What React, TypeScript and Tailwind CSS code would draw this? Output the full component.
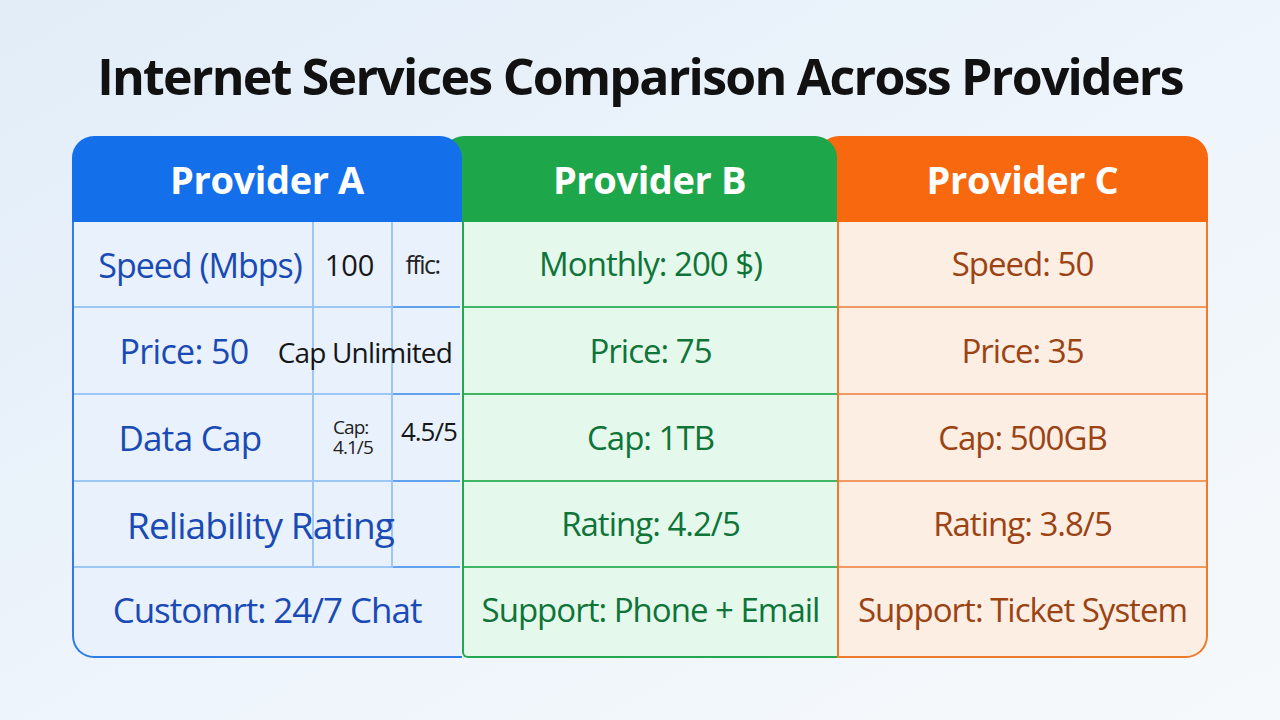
import React from 'react'

const rowH = ['h-[86px]', 'h-[87px]', 'h-[87px]', 'h-[86px]']

const bRows = ['Monthly: 200 $)', 'Price: 75', 'Cap: 1TB', 'Rating: 4.2/5', 'Support: Phone + Email']
const cRows = ['Speed: 50', 'Price: 35', 'Cap: 500GB', 'Rating: 3.8/5', 'Support: Ticket System']

function Header({ label, cls }: { label: string; cls: string }) {
  return (
    <div className={`relative h-[86px] rounded-t-[22px] flex items-center justify-center text-white font-bold text-[38px] tracking-[-0.01em] ${cls}`}
      style={{ fontFamily: '"Open Sans", sans-serif' }}>
      {label}
    </div>
  )
}

function SideColumn({ rows, wrap, line, text }: { rows: string[]; wrap: string; line: string; text: string }) {
  return (
    <div className={`flex flex-col ${wrap}`}>
      {rows.map((r, i) => (
        <div key={r}
          className={`flex items-center justify-center whitespace-nowrap text-[33px] font-medium tracking-[-0.03em] ${text} ${i < 4 ? `${rowH[i]} border-b-2 ${line}` : 'flex-1 pb-1'}`}
          style={{ fontFamily: '"Open Sans", sans-serif' }}>
          {r}
        </div>
      ))}
    </div>
  )
}

export default function App() {
  const cellA = 'border-b-2 border-[#5fa2ee]'
  const sub = 'border-r-2 border-[#9cc7f4]'
  const txt = 'flex items-center whitespace-nowrap'

  return (
    <div className="w-[1280px] h-[720px] overflow-hidden bg-linear-to-br from-[#e2edf8] via-[#edf4fb] to-[#f6f9fb] flex flex-col items-center pt-[44px]">
      <h1 className="h-[64px] leading-[64px] text-[50px] font-bold text-[#111] tracking-[-0.035em]"
        style={{ fontFamily: '"Open Sans", sans-serif' }}>
        Internet Services Comparison Across Providers
      </h1>

      <div className="mt-[28px] w-[1136px]">
        <div className="flex">
          <Header label="Provider A" cls="w-[390px] z-20 bg-[#1470ea]" />
          <Header label="Provider B" cls="w-[395px] -ml-5 pl-5 z-10 bg-[#1ea64b]" />
          <Header label="Provider C" cls="w-[391px] -ml-5 pl-5 bg-[#f8680f]" />
        </div>

        <div className="flex h-[436px]">
          {/* provider A, with the stray sub-columns */}
          <div className="w-[390px] border-l-2 border-b-2 border-[#2f7ce6] rounded-bl-[22px] bg-[#e8f1fc] grid grid-cols-[240px_79px_67px] grid-rows-[86px_87px_87px_86px_1fr] text-[#1a4ab4] font-medium"
            style={{ fontFamily: '"Open Sans", sans-serif' }}>
            {[0, 1, 2, 3].map(r => (
              <React.Fragment key={r}>
                <div className={`${cellA} ${sub} col-start-1`} style={{ gridRowStart: r + 1 }} />
                <div className={`${cellA} ${sub} col-start-2`} style={{ gridRowStart: r + 1 }} />
                <div className={`${cellA} col-start-3`} style={{ gridRowStart: r + 1 }} />
              </React.Fragment>
            ))}

            <div className={`${txt} row-start-1 col-start-1 justify-center pl-3 text-[34px] tracking-[-0.03em]`}>Speed (Mbps)</div>
            <div className={`${txt} row-start-1 col-start-2 justify-center pr-2 text-[29px] font-normal text-[#161616]`}>100</div>
            <div className={`${txt} row-start-1 col-start-3 justify-center pr-2 text-[25px] font-normal text-[#222] tracking-[-0.06em]`}>ffic:</div>

            <div className={`${txt} row-start-2 col-start-1 justify-center pr-5 text-[34px] tracking-[-0.02em]`}>Price: 50</div>
            <div className={`${txt} row-start-2 col-start-2 col-span-2 justify-end pr-2 text-[28px] font-normal text-[#161616] tracking-[-0.03em]`}>Cap Unlimited</div>

            <div className={`${txt} row-start-3 col-start-1 justify-center pr-2 text-[35px] tracking-[-0.02em]`}>Data Cap</div>
            <div className="row-start-3 col-start-2 flex items-center pl-[19px] pb-1 text-[19px] leading-[20px] font-normal text-[#222] tracking-[-0.05em]">
              <span>Cap:<br />4.1/5</span>
            </div>
            <div className={`${txt} row-start-3 col-start-3 justify-start items-start pt-[17px] pl-2 text-[26px] font-normal text-[#161616] tracking-[-0.04em]`}>4.5/5</div>

            <div className={`${txt} row-start-4 col-start-1 col-span-3 justify-start pl-[53px] text-[37px] tracking-[-0.025em]`}>Reliability Rating</div>

            <div className={`${txt} row-start-5 col-start-1 col-span-3 justify-center pb-1 text-[35px] tracking-[-0.03em]`}>Customrt: 24/7 Chat</div>
          </div>

          <SideColumn rows={bRows} wrap="w-[375px] border-l-2 border-b-2 border-[#22a84f] bg-[#e5f8ec] rounded-bl-[6px]" line="border-[#3fb767]" text="text-[#0e7438]" />
          <SideColumn rows={cRows} wrap="flex-1 border-l-2 border-r-2 border-b-2 border-[#ee7a2c] rounded-br-[22px] bg-[#fdeee3]" line="border-[#f09a62]" text="text-[#9b4313]" />
        </div>
      </div>
    </div>
  )
}
